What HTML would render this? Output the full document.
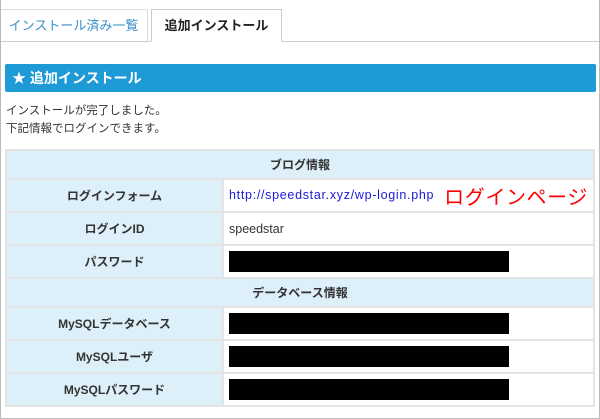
<!DOCTYPE html>
<html><head><meta charset="utf-8"><style>
*{margin:0;padding:0;box-sizing:border-box}
body{width:600px;height:419px;background:#fff;font-family:"Liberation Sans","Noto Sans CJK JP",sans-serif;position:relative;overflow:hidden;color:#333}
.frame{position:absolute;left:0;top:0;width:600px;height:419px;border:1px solid #bbb;border-top:none}
.tabline{position:absolute;left:0;top:41px;width:600px;height:1px;background:#ccc}
.tab{position:absolute;top:9px;height:33px;font-size:13px;line-height:32px;text-align:center}
.t1{left:0;width:148px;color:#3a8fc7;border-right:1px solid #ddd;border-top:1px solid #ddd;background:#fff}
.t2{left:151px;width:131px;font-weight:bold;color:#222;border:1px solid #ccc;border-bottom:1px solid #fff;background:#fff;height:33px}
.bar{position:absolute;left:5px;top:64px;width:591px;height:28px;background:#1e9bd7;color:#fff;font-weight:bold;font-size:14px;line-height:28px;padding-left:7px;border-radius:2px}
.msg{position:absolute;left:6px;top:102px;font-size:11.5px;line-height:18px;color:#333}
table{position:absolute;left:5px;top:149px;width:590px;border-collapse:collapse;font-size:12px}
td{border:2px solid #e4e4e4;height:33px}
.h td{background:#ddf0fa;text-align:center;font-weight:bold;height:29px}
.k{background:#ddf0fa;width:217px;text-align:center;font-weight:bold}
.v{padding-left:5px;font-size:12.5px}
.blk{display:inline-block;width:280px;height:21px;background:#000;vertical-align:middle}
a{color:#1a1ad8;text-decoration:none;font-size:12.5px;letter-spacing:0.7px}
.red{color:#f00;font-size:20px;margin-left:10px;vertical-align:middle;letter-spacing:0.6px}
</style></head><body>
<div class="tab t1">インストール済み一覧</div>
<div class="tabline"></div>
<div class="tab t2">追加インストール</div>
<div class="bar">★ 追加インストール</div>
<div class="msg">インストールが完了しました。<br>下記情報でログインできます。</div>
<table>
<tr class="h"><td colspan="2">ブログ情報</td></tr>
<tr><td class="k">ログインフォーム</td><td class="v"><a>http://speedstar.xyz/wp-login.php</a><span class="red">ログインページ</span></td></tr>
<tr><td class="k">ログインID</td><td class="v">speedstar</td></tr>
<tr><td class="k">パスワード</td><td class="v"><span class="blk"></span></td></tr>
<tr class="h"><td colspan="2">データベース情報</td></tr>
<tr><td class="k">MySQLデータベース</td><td class="v"><span class="blk"></span></td></tr>
<tr><td class="k">MySQLユーザ</td><td class="v"><span class="blk"></span></td></tr>
<tr><td class="k">MySQLパスワード</td><td class="v"><span class="blk"></span></td></tr>
</table>
<div class="frame"></div>
</body></html>
